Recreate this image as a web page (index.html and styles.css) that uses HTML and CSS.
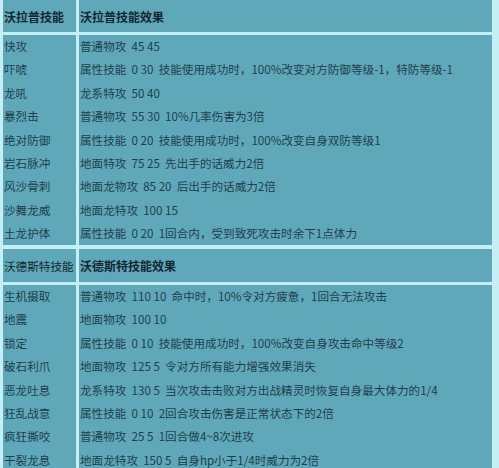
FILE: index.html
```html
<!DOCTYPE html>
<html lang="zh">
<head>
<meta charset="utf-8">
<link rel="stylesheet" href="styles.css">
</head>
<body>
<div class="skills">
  <div class="cell head bold">沃拉普技能</div>
  <div class="cell head bold">沃拉普技能效果</div>
  <div class="cell body">快攻<br>吓唬<br>龙吼<br>暴烈击<br>绝对防御<br>岩石脉冲<br>风沙骨刺<br>沙舞龙威<br>土龙护体</div>
  <div class="cell body">普通物攻&nbsp; 45 45<br>属性技能&nbsp; 0 30&nbsp; 技能使用成功时，100%改变对方防御等级-1，特防等级-1<br>龙系特攻&nbsp; 50 40<br>普通物攻&nbsp; 55 30&nbsp; 10%几率伤害为3倍<br>属性技能&nbsp; 0 20&nbsp; 技能使用成功时，100%改变自身双防等级1<br>地面特攻&nbsp; 75 25&nbsp; 先出手的话威力2倍<br>地面龙物攻&nbsp; 85 20&nbsp; 后出手的话威力2倍<br>地面龙特攻&nbsp; 100 15<br>属性技能&nbsp; 0 20&nbsp; 1回合内，受到致死攻击时余下1点体力</div>
  <div class="cell head second">沃德斯特技能</div>
  <div class="cell head second bold">沃德斯特技能效果</div>
  <div class="cell body">生机摄取<br>地震<br>锁定<br>破石利爪<br>恶龙吐息<br>狂乱战意<br>疯狂撕咬<br>干裂龙息</div>
  <div class="cell body">普通物攻&nbsp; 110 10&nbsp; 命中时，10%令对方疲惫，1回合无法攻击<br>地面物攻&nbsp; 100 10<br>属性技能&nbsp; 0 10&nbsp; 技能使用成功时，100%改变自身攻击命中等级2<br>地面物攻&nbsp; 125 5&nbsp; 令对方所有能力增强效果消失<br>龙系特攻&nbsp; 130 5&nbsp; 当次攻击击败对方出战精灵时恢复自身最大体力的1/4<br>属性技能&nbsp; 0 10&nbsp; 2回合攻击伤害是正常状态下的2倍<br>普通物攻&nbsp; 25 5&nbsp; 1回合做4~8次进攻<br>地面龙特攻&nbsp; 150 5&nbsp; 自身hp小于1/4时威力为2倍</div>
</div>
</body>
</html>
```
FILE: styles.css
```css
html, body {
  margin: 0;
  padding: 0;
  background: #c6eff5;
  overflow: hidden;
}
body {
  font-family: "Microsoft YaHei", "Noto Sans CJK SC", "Liberation Sans", sans-serif;
  font-size: 11.6px;
  color: #1f3f4e;
}
.skills {
  display: grid;
  grid-template-columns: 73px 413px;
  grid-template-rows: 32px 210px 34px auto;
  column-gap: 3px;
  row-gap: 3px;
  padding: 0 3px;
}
.cell {
  background: #5ea8b9;
  padding: 0 1px;
  white-space: nowrap;
  overflow: hidden;
}
.head {
  display: flex;
  align-items: center;
  color: #14262e;
}
.second {
  margin-top: 1px;
}
.bold {
  font-size: 12px;
  font-weight: bold;
}
.body {
  line-height: 23.4px;
}
```
